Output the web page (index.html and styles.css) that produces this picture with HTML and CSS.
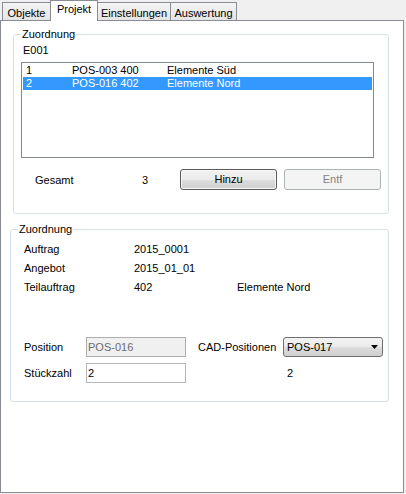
FILE: index.html
```html
<!DOCTYPE html>
<html lang="de">
<head>
<meta charset="utf-8">
<title>Projekt</title>
<link rel="stylesheet" href="styles.css">
</head>
<body>
<div class="window">
  <div class="tabs">
    <div class="tab tab-objekte">Objekte</div>
    <div class="tab tab-projekt active">Projekt</div>
    <div class="tab tab-einst">Einstellungen</div>
    <div class="tab tab-ausw">Auswertung</div>
  </div>
  <div class="panel">
    <fieldset class="group group-top">
      <legend>Zuordnung</legend>
      <div class="code">E001</div>
      <div class="list">
        <div class="row"><span class="c1">1</span><span class="c2">POS-003 400</span><span>Elemente Süd</span></div>
        <div class="row selected"><span class="c1">2</span><span class="c2">POS-016 402</span><span>Elemente Nord</span></div>
      </div>
      <div class="totals">
        <span class="lbl">Gesamt</span>
        <span class="lbl">3</span>
        <button class="btn btn-default" type="button">Hinzu</button>
        <button class="btn" type="button" disabled>Entf</button>
      </div>
    </fieldset>
    <fieldset class="group group-bottom">
      <legend>Zuordnung</legend>
      <div class="info">
        <span>Auftrag</span><span>2015_0001</span><span></span>
        <span>Angebot</span><span>2015_01_01</span><span></span>
        <span>Teilauftrag</span><span>402</span><span>Elemente Nord</span>
      </div>
      <div class="form">
        <span>Position</span>
        <input class="text disabled" type="text" value="POS-016" disabled>
        <span></span>
        <span>CAD-Positionen</span>
        <div class="combo"><span>POS-017</span><svg width="7" height="4" viewBox="0 0 7 4"><polygon points="0,0 7,0 3.5,4" fill="#000"/></svg></div>
        <span>Stückzahl</span>
        <input class="text" type="text" value="2">
        <span></span>
        <span></span>
        <span class="cad-count">2</span>
      </div>
    </fieldset>
  </div>
</div>
</body>
</html>
```

FILE: styles.css
```css
* {
  box-sizing: border-box;
}

body {
  margin: 0;
  background: #f0f0f0;
  font: 11px/13px "Liberation Sans", Arial, sans-serif;
  color: #000;
}

.window {
  width: 406px;
  height: 494px;
}

.tabs {
  display: flex;
  align-items: flex-end;
  height: 20px;
  padding-left: 2px;
}

.tab {
  height: 18px;
  border: 1px solid #898c95;
  border-bottom: none;
  background: linear-gradient(#f4f4f4, #e4e4e4);
  text-align: center;
  padding-top: 4px;
  margin-left: -1px;
  white-space: nowrap;
}

.tab-objekte { width: 49px; margin-left: 0; }
.tab-projekt { width: 48px; }
.tab-einst { width: 74px; }
.tab-ausw { width: 67px; }

.tab.active {
  height: 21px;
  margin-bottom: -1px;
  padding-top: 2px;
  background: #fff;
  position: relative;
  z-index: 1;
}

.panel {
  width: 404px;
  height: 473px;
  border: 1px solid #898c95;
  background: #fff;
  display: flex;
  flex-direction: column;
  align-items: flex-start;
}

.group {
  margin: 0;
  min-width: 0;
  border: 1px solid #d5dfe5;
  border-radius: 3px;
  padding: 3px 7px 23px 7px;
}

.group legend {
  padding: 0 1px;
  line-height: 13px;
}

.group-top {
  margin: 7px 0 0 12px;
  width: 376px;
}

.group-bottom {
  margin: 9px 0 0 9px;
  width: 379px;
  padding-top: 7px;
  padding-bottom: 18px;
}

.code {
  margin-left: 2px;
}

.list {
  margin-top: 5px;
  height: 96px;
  width: 353px;
  border: 1px solid #828790;
  padding: 1px;
  background: #fff;
}

.row {
  display: flex;
  height: 13px;
  padding-left: 3px;
  white-space: nowrap;
}

.row .c1 { width: 46px; }
.row .c2 { width: 95px; }

.row.selected {
  background: #3399ff;
  color: #fff;
}

.totals {
  margin-top: 11px;
  display: grid;
  grid-template-columns: 107px 38px 97px 97px;
  column-gap: 0;
  padding-left: 14px;
  align-items: start;
}

.totals .lbl {
  padding-top: 5px;
}

.btn {
  width: 97px;
  height: 21px;
  border: 1px solid #707070;
  border-radius: 3px;
  background: linear-gradient(#f2f2f2 0%, #ebebeb 50%, #dddddd 50%, #cfcfcf 100%);
  font: inherit;
  color: #000;
  padding: 0;
}

.btn + .btn {
  margin-left: 7px;
}

.btn-default {
  border-color: #5a5a5a;
  box-shadow: inset 0 0 0 1px #f8f8f8;
}

.btn:disabled {
  border-color: #adb2b5;
  background: #f4f4f4;
  color: #838383;
}

.info {
  display: grid;
  grid-template-columns: 110px 103px auto;
  row-gap: 6px;
  padding-left: 6px;
  white-space: nowrap;
}

.form {
  margin-top: 43px;
  display: grid;
  grid-template-columns: 62px 100px 12px 85px 100px;
  grid-template-rows: 20px 20px;
  row-gap: 6px;
  padding-left: 6px;
  align-items: center;
  white-space: nowrap;
}

.text {
  width: 100px;
  height: 20px;
  border: 1px solid #b4b6bc;
  padding: 0 1px;
  font: inherit;
  color: #000;
  background: #fff;
  margin: 0;
}

.text.disabled {
  background: #f0f0f0;
  color: #6d6d6d;
  border-color: #adadad;
}

.combo {
  width: 100px;
  height: 20px;
  border: 1px solid #707070;
  border-radius: 3px;
  background: linear-gradient(#f2f2f2 0%, #ebebeb 50%, #dddddd 50%, #cfcfcf 100%);
  display: flex;
  align-items: center;
  justify-content: space-between;
  padding: 0 4px 0 3px;
}

.cad-count {
  padding-left: 4px;
}
```
